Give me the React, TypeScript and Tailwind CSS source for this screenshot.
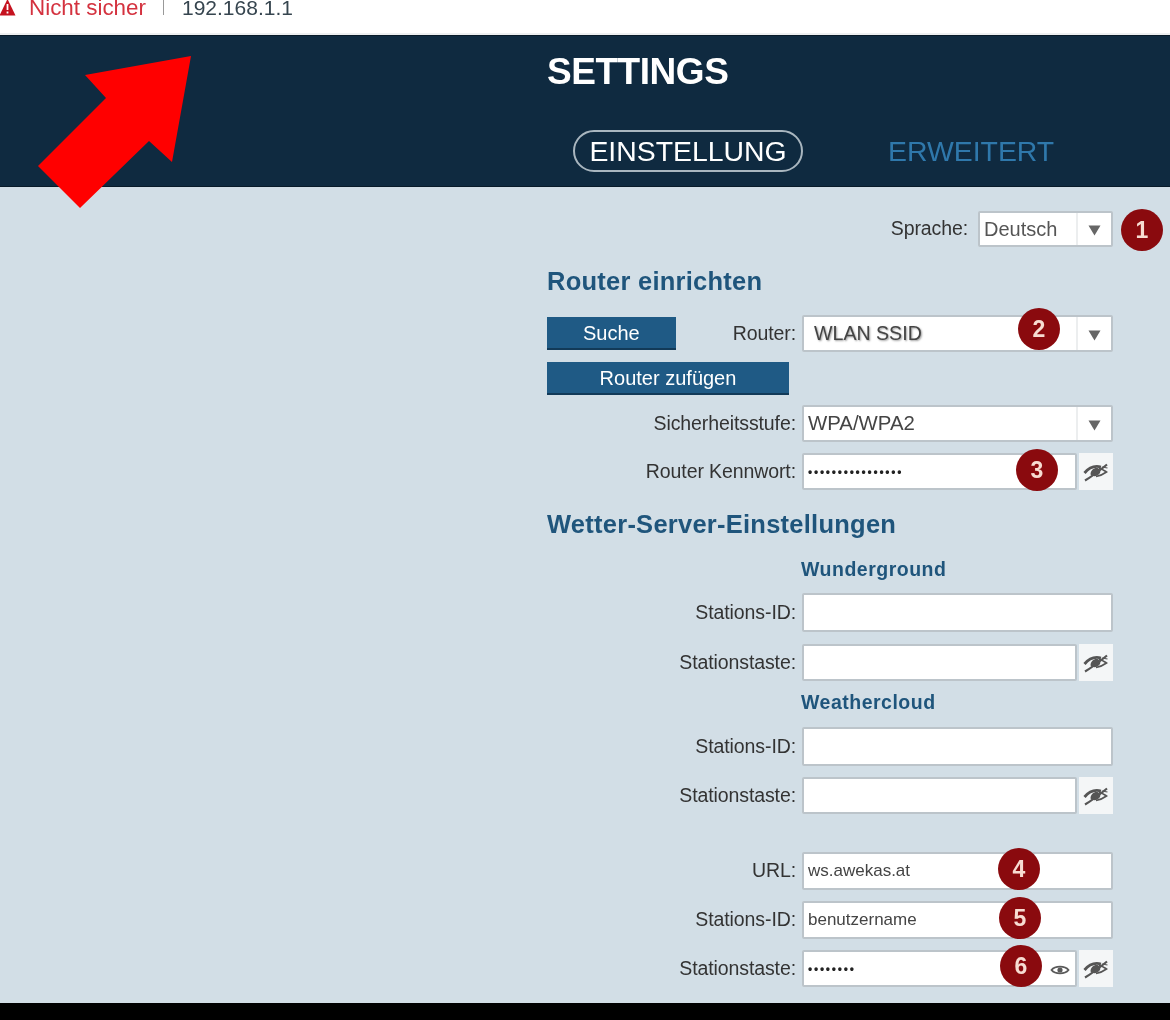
import React from "react";

function SlashEye() {
  return (
    <svg width="26" height="20" viewBox="0 0 26 20" fill="none">
      <path d="M1.5 11 C6 5.5 12 3.5 18 5" stroke="#555" strokeWidth="2.8" />
      <path d="M16 6 C19 7 21 8.5 23.5 10 C20 12.5 16.5 14 13 14.5" stroke="#555" strokeWidth="1.6" />
      <path d="M7.5 12.5 C7.5 8.5 10.5 6 13.5 6 C16.5 6 18 8.5 17 11 C15 14 11 15.5 7.5 12.5 Z" fill="#555" />
      <path d="M2 18.5 C8 15 16 9 24 2.5" stroke="#555" strokeWidth="2.2" />
      <path d="M19 5 L24.5 6" stroke="#555" strokeWidth="1.2" />
    </svg>
  );
}

function OpenEye() {
  return (
    <svg width="20" height="12" viewBox="0 0 20 12" fill="none">
      <path d="M1.5 6 C5 1.5 15 1.5 18.5 6 C15 10.5 5 10.5 1.5 6 Z" stroke="#5a5a5a" strokeWidth="1.8" />
      <circle cx="10" cy="6" r="2.6" fill="#5a5a5a" />
    </svg>
  );
}

function Badge({ n, className }: { n: number; className: string }) {
  return (
    <span
      className={
        "absolute flex h-[42px] w-[42px] items-center justify-center rounded-full bg-[#8a0a0e] text-[23px] font-bold text-[#f7dcd2] " +
        className
      }
    >
      {n}
    </span>
  );
}

function Label({ children }: { children: React.ReactNode }) {
  return <span className="w-[249px] shrink-0 text-right text-[19.5px] tracking-[-0.1px] text-[#333]">{children}</span>;
}

function Box({ children, h = "h-[37px]", className = "" }: { children?: React.ReactNode; h?: string; className?: string }) {
  return (
    <div
      className={
        "relative flex items-center rounded-[2px] border-2 border-[#bcc4ca] bg-white " + h + " " + className
      }
    >
      {children}
    </div>
  );
}

function Arrow() {
  return (
    <span className="ml-auto flex h-full w-[35px] shrink-0 items-center justify-center border-l-2 border-[#eceeef] pt-[3px]">
      <svg width="13" height="11" viewBox="0 0 13 11">
        <path d="M0.5 0.5 H12.5 L6.5 10.5 Z" fill="#666" />
      </svg>
    </span>
  );
}

function Select({ value, badge, blur }: { value: string; badge?: React.ReactNode; blur?: boolean }) {
  return (
    <Box h="h-[37px]" className="w-[311px]">
      <span
        className={
          blur
            ? "pl-[10px] text-[19.6px] text-[#444] [text-shadow:1px_1px_2px_#999]"
            : "pl-[4px] text-[20.4px] text-[#444]"
        }
      >
        {value}
      </span>
      {badge}
      <Arrow />
    </Box>
  );
}

function SecretField({ dots, badge, open, h = "h-[37px]" }: { dots?: string; badge?: React.ReactNode; open?: boolean; h?: string }) {
  return (
    <div className="flex items-center gap-[2px]">
      <Box h={h} className="w-[275px]">
        {dots ? <span className="pl-[4px] text-[12px] font-bold tracking-[1.75px] text-[#222]">{dots}</span> : null}
        {badge}
        {open ? (
          <span className="absolute right-[5px] top-[12px] flex">
            <OpenEye />
          </span>
        ) : null}
      </Box>
      <span className="flex h-[37px] w-[34px] items-center justify-center bg-[#f4f6f7]">
        <SlashEye />
      </span>
    </div>
  );
}

function Row({ label, children, mt }: { label: string; children: React.ReactNode; mt: string }) {
  return (
    <div className={"flex items-center gap-[6px] " + mt}>
      <Label>{label}</Label>
      {children}
    </div>
  );
}

function SubHead({ children, mt }: { children: React.ReactNode; mt: string }) {
  return (
    <div className={"pl-[254px] text-[19.5px] leading-[22px] font-bold tracking-[0.5px] text-[#1f557c] " + mt}>{children}</div>
  );
}

export default function App() {
  return (
    <div className="relative h-[1020px] w-[1170px] overflow-hidden bg-[#d2dee6] font-['Liberation_Sans',Arial,sans-serif] blur-[0.4px]">
      {/* browser address bar */}
      <div className="flex h-[35px] items-start border-b-2 border-[#eef0f1] bg-white">
        <svg width="17" height="16" viewBox="0 0 17 16" className="ml-[-1px] shrink-0">
          <path d="M8.5 -1 L16.5 15.5 H0.5 Z" fill="#c5121f" />
          <rect x="7.6" y="4" width="1.8" height="6" fill="#fff" />
          <rect x="7.6" y="11.5" width="1.8" height="2" fill="#fff" />
        </svg>
        <span className="ml-[13px] text-[22.4px] leading-[16px] text-[#d4323f]">Nicht sicher</span>
        <span className="ml-[17px] h-[15px] w-[1px] bg-[#999]" />
        <span className="ml-[18px] text-[21px] leading-[16px] text-[#36454f]">192.168.1.1</span>
      </div>

      {/* header */}
      <header className="h-[152px] border-y border-[#081a29] bg-[#0f2a40] pl-[547px]">
        <h1 className="pt-[15px] text-[37px] leading-[42px] font-bold tracking-[-0.45px] text-white">SETTINGS</h1>
        <nav className="mt-[37px] ml-[26px] flex items-center">
          <span className="flex h-[42px] w-[230px] items-center justify-center rounded-full border-2 border-[#a9b6bf] text-[28.4px] text-white">
            EINSTELLUNG
          </span>
          <span className="ml-[85px] text-[28.4px] text-[#2f78ab]">ERWEITERT</span>
        </nav>
      </header>

      {/* red arrow */}
      <svg className="absolute left-0 top-0" width="200" height="215" viewBox="0 0 200 215">
        <polygon points="191,56 85,75 106,98 38,166 80,208 149,141 172,162" fill="#ff0000" />
      </svg>

      {/* form */}
      <main className="ml-[547px] w-[566px]">
        <div className="flex items-center justify-end gap-[10px] pt-[24px]">
          <span className="text-[19.5px] tracking-[-0.1px] text-[#333]">Sprache:</span>
          <Box h="h-[36px]" className="relative w-[135px]">
            <span className="pl-[4px] text-[20px] text-[#555]">Deutsch</span>
            <Arrow />
            <Badge n={1} className="left-[141px] top-[-4px]" />
          </Box>
        </div>

        <h2 className="mt-[20px] text-[25.5px] leading-[28px] font-bold tracking-[0.25px] text-[#1f557c]">Router einrichten</h2>

        <div className="mt-[20px] flex items-center">
          <button className="h-[33px] w-[129px] border-b-2 border-[#123a58] bg-[#1f5a85] text-[20px] text-white">Suche</button>
          <span className="ml-[57px] text-[19.5px] tracking-[-0.1px] text-[#333]">Router:</span>
          <span className="ml-[6px]">
            <Select value="WLAN SSID" blur badge={<Badge n={2} className="left-[214px] top-[-9px]" />} />
          </span>
        </div>
        <button className="mt-[10px] block h-[33px] w-[242px] border-b-2 border-[#123a58] bg-[#1f5a85] text-[20px] text-white">
          Router zufügen
        </button>

        <Row label="Sicherheitsstufe:" mt="mt-[10px]">
          <Select value="WPA/WPA2" />
        </Row>
        <Row label="Router Kennwort:" mt="mt-[11px]">
          <SecretField dots="••••••••••••••••" badge={<Badge n={3} className="left-[212px] top-[-6px]" />} />
        </Row>

        <h2 className="mt-[20px] text-[25.5px] leading-[28px] font-bold tracking-[0.25px] text-[#1f557c]">Wetter-Server-Einstellungen</h2>

        <SubHead mt="mt-[20px]">Wunderground</SubHead>
        <Row label="Stations-ID:" mt="mt-[13px]">
          <Box h="h-[39px]" className="w-[311px]" />
        </Row>
        <Row label="Stationstaste:" mt="mt-[12px]">
          <SecretField />
        </Row>
        <SubHead mt="mt-[10px]">Weathercloud</SubHead>
        <Row label="Stations-ID:" mt="mt-[14px]">
          <Box h="h-[39px]" className="w-[311px]" />
        </Row>
        <Row label="Stationstaste:" mt="mt-[11px]">
          <SecretField />
        </Row>

        <Row label="URL:" mt="mt-[38px]">
          <Box h="h-[38px]" className="w-[311px]">
            <span className="pl-[4px] text-[17px] text-[#444]">ws.awekas.at</span>
            <Badge n={4} className="left-[194px] top-[-6px]" />
          </Box>
        </Row>
        <Row label="Stations-ID:" mt="mt-[11px]">
          <Box h="h-[38px]" className="w-[311px]">
            <span className="pl-[4px] text-[17px] text-[#444]">benutzername</span>
            <Badge n={5} className="left-[195px] top-[-6px]" />
          </Box>
        </Row>
        <Row label="Stationstaste:" mt="mt-[11px]">
          <SecretField dots="••••••••" open badge={<Badge n={6} className="left-[196px] top-[-7px]" />} />
        </Row>
      </main>

      <div className="absolute bottom-0 left-0 h-[17px] w-full bg-black" />
    </div>
  );
}
